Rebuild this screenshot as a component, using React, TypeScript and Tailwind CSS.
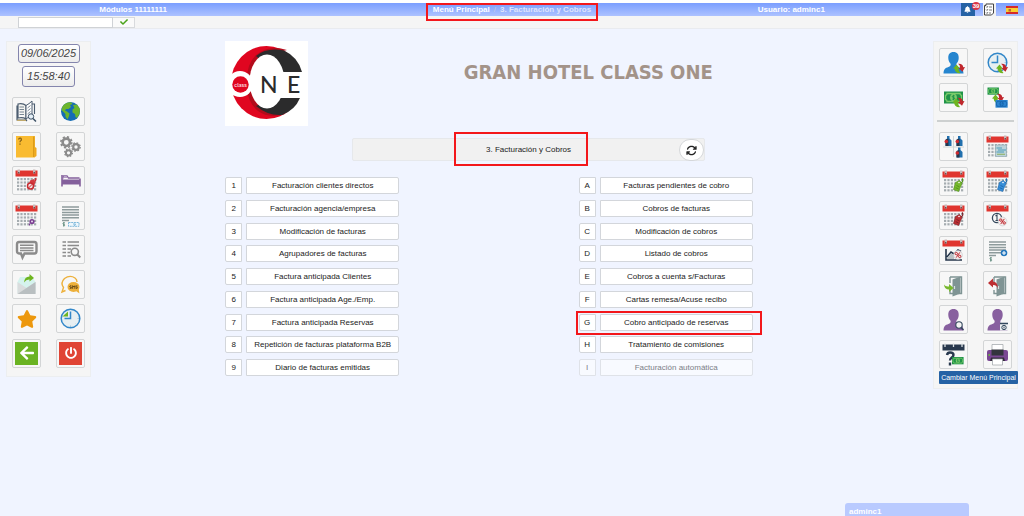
import { useState } from "react";
import type { ReactNode } from "react";
import { FaBell, FaStar, FaArrowLeft, FaPowerOff, FaCheck } from "react-icons/fa";
import { FaArrowsRotate } from "react-icons/fa6";

function Svg({ children }: { children: ReactNode }) {
  return (
    <svg viewBox="0 0 23 23" className="size-[23px]" fill="none" aria-hidden="true">
      {children}
    </svg>
  );
}

/* Small green/red exchange arrows used as a badge on several icons. */
function Swap({ x, y }: { x: number; y: number }) {
  return (
    <g transform={`translate(${x} ${y})`}>
      <path d="M-0.500 5 3 1 6.500 5.200 5 5Q5 7.600 7 9.600 1.600 10 1.200 5.200Z" fill="#6fb520" />
      <path d="M4.600 0.200Q9.500 -0.200 9.700 3.800L11.500 3.600 9 8.200 4.800 4.600 6.600 4.400Q6.800 1.800 4.600 0.200Z" fill="#c0272d" />
    </g>
  );
}

function Calendar({ children, dots = true }: { children?: ReactNode; dots?: boolean }) {
  const cols = [2, 5.4, 8.8, 12.2, 15.6, 19];
  const rows = [9, 12.4, 15.8, 19.2];
  return (
    <Svg>
      <path d="M0.5 1.5H22.5V7.5H0.5Z" fill="#e0352f" />
      <path d="M2.6 0.5h2.4v4H2.6zM18 0.5h2.4v4H18z" fill="#c9b9b9" />
      <path d="M3.2 3h1.2v1.5H3.2zM18.6 3h1.2v1.5h-1.2z" fill="#5a3a3a" />
      {dots &&
        rows.map((r) => cols.map((c) => <path key={`${r}-${c}`} d={`M${c} ${r}h2.2v2.2h-2.2z`} fill="#a5acb0" />))}
      {children}
    </Svg>
  );
}

function Tag({ color, dark }: { color: string; dark: string }) {
  return (
    <g>
      <path d="M20 8.5Q22.5 11 18 14" stroke={dark} strokeWidth="1.2" />
      <path d="M13.5 12.5 17.5 10.5 20 13.5 16.5 21.5 11.5 19.5Z" fill={color} stroke={dark} strokeWidth="0.6" />
      <path d="M14.5 15.5l3 1.3M13.7 17.7l3 1.3" stroke={dark} strokeWidth="0.8" />
      <circle cx="17" cy="12.5" r="0.8" fill="#fff" />
    </g>
  );
}

function Percent({ x, y }: { x: number; y: number }) {
  return (
    <g transform={`translate(${x} ${y})`}>
      <circle r="4.4" fill="#f3eeee" stroke="#c5c9cc" strokeWidth="0.6" />
      <circle cx="-1.7" cy="-1.4" r="1.2" stroke="#c0272d" strokeWidth="1" />
      <circle cx="1.7" cy="1.4" r="1.2" stroke="#c0272d" strokeWidth="1" />
      <path d="M1.8-2.6-1.8 2.6" stroke="#c0272d" strokeWidth="1" />
    </g>
  );
}

function Person({ color, children }: { color: string; children?: ReactNode }) {
  return (
    <Svg>
      <path
        d="M11.5 1C7.8 1 6 3.5 6.3 7.2c.1 2.6 1.2 4.3 2.3 5.5.3 1.8-.4 2.7-2.2 3.3C3.3 17 1.7 18 1.5 22.4H21.5C21.300 18 19.700 17 16.600 16 14.800 15.400 14.100 14.500 14.400 12.700 15.500 11.500 16.600 9.800 16.700 7.200 17 3.500 15.200 1 11.500 1Z"
        fill={color}
      />
      {children}
    </Svg>
  );
}

function Bill({ x, y, s, blue = false }: { x: number; y: number; s: number; blue?: boolean }) {
  const outer = blue ? "#2b83d0" : "#1f9348";
  const inner = blue ? "#1764ac" : "#7ccb6b";
  return (
    <g transform={`translate(${x} ${y}) scale(${s})`}>
      <path d="M0 0H19V12H0Z" fill={outer} />
      <path d="M3 2H16Q16 3.800 17.500 3.800V8.200Q16 8.200 16 10H3Q3 8.200 1.500 8.200V3.800Q3 3.800 3 2Z" stroke={inner} strokeWidth="1.300" />
      <ellipse cx="9.500" cy="6" rx="3.400" ry="3.800" fill={inner} />
      <path d="M10.800 4.500Q9.500 3.500 8.400 4.500T9.500 6 10.500 7.500 8.200 7.500M9.500 3.300V8.700" stroke={outer} strokeWidth="0.9" />
    </g>
  );
}

function TextLines({ children }: { children?: ReactNode }) {
  return (
    <Svg>
      <path d="M3 3H20M3 5.700H20M3 8.400H20M3 11.100H20M3 13.800H20M3 16.500H10" stroke="#8e9b9c" strokeWidth="1.500" />
      <path d="M5.500 18.600Q3.800 18.600 4 19.700T5.500 20.800 4 22M4.900 18V22.500" stroke="#5f8a7c" strokeWidth="0.9" />
      {children}
    </Svg>
  );
}

function Door({ children }: { children: ReactNode }) {
  return (
    <Svg>
      <path d="M8 3H19.500V19.500H16" stroke="#7f9494" strokeWidth="1.400" />
      <path d="M8 3V9M8 16V19.500H11" stroke="#7f9494" strokeWidth="1.400" />
      <path d="M10.500 5.500 18.500 2.500V19.500L10.500 22.500Z" fill="#7f9494" />
      <path d="M12.500 12V15" stroke="#d8e0e0" strokeWidth="1.200" />
      {children}
    </Svg>
  );
}

function Bottle({ x, y }: { x: number; y: number }) {
  return (
    <g transform={`translate(${x} ${y})`}>
      <path d="M2.500 0H5V2.500L7 4.500V10H1V4.500L2.500 2.500Z" fill="#2170ae" />
      <path d="M1 3.500 4 2.500V10H1Z" fill="#26364b" />
      <circle cx="1.800" cy="5.500" r="1.800" fill="#d02b31" />
    </g>
  );
}

function Clock() {
  return (
    <>
      <circle cx="11.500" cy="11.500" r="9.300" fill="#e7eff2" stroke="#3287c9" strokeWidth="1.500" />
      <path d="M11.500 4.500V11.500H5.500" stroke="#3287c9" strokeWidth="1.500" />
      <path d="M11.500 18.500v1.500M18.500 11.500H20M16.700 16.700l.8.8" stroke="#9dbfd4" strokeWidth="0.9" />
    </>
  );
}

const leftIcons: { label: string; icon: ReactNode }[] = [
  {
    label: "Consultar libro",
    icon: (
      <Svg>
        <path d="M3 4Q8 3 11 5.500V19Q8 17 3 18ZM3 6H2V20H11L12 21" fill="#f4f4f0" stroke="#4c5d70" strokeWidth="1.200" />
        <path d="M11 5.500Q14 4 17 1V14.500L11 19Z" fill="#fff" stroke="#4c5d70" strokeWidth="1" />
        <path d="M17 4H19.500V14" stroke="#4c5d70" strokeWidth="1.100" />
        <path d="M4.500 7H9M4.500 9.500H9M4.500 12H9M4.500 14.500H9M12.500 8 15.500 5.500M12.500 11 15.500 8.500M12.500 14 15.500 11.500" stroke="#697988" strokeWidth="0.9" />
        <path d="M2 20.300H11" stroke="#c8a95b" />
        <circle cx="16" cy="16.500" r="2.700" fill="#e6f0f7" stroke="#3c5065" />
        <path d="m18 18.500 3 3" stroke="#3c5065" strokeWidth="1.500" />
      </Svg>
    ),
  },
  {
    label: "Internet",
    icon: (
      <Svg>
        <circle cx="11.500" cy="11.500" r="9.500" fill="#166cb4" />
        <path d="M3.500 6.500Q7 2 12 2.300L13.500 4 11 5 12 7 9.500 9 7 9 6 10.500 8 11.500 10.500 13.500 10 16 8.500 19.500 6.500 16.500 6.500 14 4 11.500 2.500 10Z" fill="#6cb52d" />
        <path d="M14 5 18 4.500 21 9 20.500 14 18 18 16.500 17 16 14 13.500 12.500 13.500 9.500 15.500 8Z" fill="#6cb52d" />
      </Svg>
    ),
  },
  {
    label: "Ayuda",
    icon: (
      <Svg>
        <path d="M1 1H20V22.500H1Z" fill="#f9bb31" />
        <path d="M18 1.500H19.500V22H18Z" fill="#dd9b18" />
        <path d="M20 12 21.500 13V21L20 22Z" fill="#f1a91c" />
        <path d="M3.500 4.500Q4 3 5.300 3.200T6.300 5.300Q5 6 5 7.300M5 8.600V9.800" stroke="#8a6418" strokeWidth="1.300" />
      </Svg>
    ),
  },
  {
    label: "Configuración",
    icon: (
      <Svg>
        <g stroke="#8b8b8b">
          <circle cx="7.300" cy="7.300" r="3.700" strokeWidth="2.600" />
          <circle cx="7.300" cy="7.300" r="5.500" strokeWidth="1.600" strokeDasharray="2.200 2.120" />
          <circle cx="17" cy="12" r="2.800" strokeWidth="2.200" />
          <circle cx="17" cy="12" r="4.200" strokeWidth="1.300" strokeDasharray="1.650 1.650" />
          <circle cx="9.500" cy="17.800" r="2.600" strokeWidth="2" />
          <circle cx="9.500" cy="17.800" r="3.900" strokeWidth="1.300" strokeDasharray="1.530 1.530" />
        </g>
      </Svg>
    ),
  },
  {
    label: "Calendario de reservas",
    icon: (
      <Calendar>
        <path d="M20.500 9Q22 11 18 14" stroke="#c82a30" strokeWidth="1.400" />
        <path d="M15 11.500 19 10 20.500 13 18 20.500 13 19.500Z" fill="#d33b40" />
        <circle cx="15.500" cy="17" r="3" stroke="#c82a30" strokeWidth="1.500" fill="#f1e0e1" />
        <path d="m13.500 19 4-4" stroke="#c82a30" />
      </Calendar>
    ),
  },
  {
    label: "Habitaciones",
    icon: (
      <Svg>
        <path d="M3 6V17.500M21 9.500V17.500" stroke="#84609c" strokeWidth="1.600" />
        <path d="M3 10.500H21V15.500H3Z" fill="#84609c" />
        <path d="M4 9.500 4.500 6.800H8L9.500 9H20.500" stroke="#84609c" strokeWidth="1.300" />
        <path d="M4.500 7.500H8V9H4.500Z" fill="#b79cc7" />
      </Svg>
    ),
  },
  {
    label: "Calendario de eventos",
    icon: (
      <Calendar>
        <circle cx="17" cy="17.500" r="2.600" fill="#7a3d91" />
        <circle cx="17" cy="17.500" r="0.900" fill="#f3e8f7" />
        <path d="M14.500 19.500v2" stroke="#7a3d91" strokeWidth="1.200" />
      </Calendar>
    ),
  },
  {
    label: "Factura",
    icon: (
      <TextLines>
        <path d="M9.500 18.500H20V22.300H9.500Z" fill="#eef7fc" stroke="#61a8d3" strokeWidth="0.800" strokeDasharray="2 0.700" />
        <path d="M14 20h2.500l-1.200 2" stroke="#61a8d3" strokeWidth="0.800" />
      </TextLines>
    ),
  },
  {
    label: "Comentarios",
    icon: (
      <Svg>
        <path d="M4 4H19.500Q21.500 4 21.500 6.500V13Q21.500 15.500 19.500 15.500H9.500L7.500 19.500 6 15.500H4Q2 15.500 2 13V6.500Q2 4 4 4Z" stroke="#8b8b8b" strokeWidth="2.400" />
        <path d="M5 7.300H18.500M5 9.900H18.500M5 12.500H18.500" stroke="#8b8b8b" strokeWidth="1.500" />
      </Svg>
    ),
  },
  {
    label: "Buscar en lista",
    icon: (
      <Svg>
        <path d="M3.500 4H7M8.500 4H20M3.500 7.500H7M8.500 7.500H20M3.500 11H7M8.500 11H12M3.500 14.500H7M8.500 14.500H11M3.500 18H7M8.500 18H12" stroke="#8b8b8b" strokeWidth="1.700" />
        <circle cx="15.800" cy="13.800" r="3.600" stroke="#8b8b8b" strokeWidth="1.600" />
        <path d="m18.300 16.500 3 3" stroke="#8b8b8b" strokeWidth="2" />
      </Svg>
    ),
  },
  {
    label: "Enviar correo",
    icon: (
      <Svg>
        <path d="M2.500 9 5 4H17L20.500 9V20H2.500Z" fill="#d5f3ee" />
        <path d="M2.500 9 11.500 15 20.500 9V21H2.500Z" fill="#d9dcdd" />
        <path d="M20.500 9V21H2.500Z" fill="#b9bfc1" />
        <path d="M9 9.500Q9.500 3.500 14.500 3.500V1L19 5 14.500 8.500V6.500Q11 6.300 9 9.500Z" fill="#6fb520" />
      </Svg>
    ),
  },
  {
    label: "Enviar SMS",
    icon: (
      <Svg>
        <path d="M6.500 17.500 3 19 4.500 14.500Q1 10 5.500 5.500 11 1.500 16 5 18 6.500 18 9" stroke="#edb03a" strokeWidth="1.400" />
        <ellipse cx="14.500" cy="14" rx="6" ry="5" fill="#edb03a" />
        <path d="m17 18 3.500 2.500-1-5" fill="#edb03a" />
        <path d="M12.500 13Q11 12.300 10.800 13.300T12.300 14.500 10.800 15.500M13.700 15.800V12.700L14.800 14 15.900 12.700V15.800M18.500 13Q17.200 12.300 17.100 13.300T18.300 14.500 17 15.500" stroke="#553b12" strokeWidth="0.900" />
      </Svg>
    ),
  },
  { label: "Favoritos", icon: <FaStar className="size-5 text-[#ed980d]" /> },
  {
    label: "Historial",
    icon: (
      <Svg>
        <Clock />
        <path d="M3.500 9.500 9 4.500V9.500Z" fill="#6fb520" />
      </Svg>
    ),
  },
  {
    label: "Volver",
    icon: (
      <span className="flex size-[23px] items-center justify-center bg-[#6ab322]">
        <FaArrowLeft className="size-4 text-white" />
      </span>
    ),
  },
  {
    label: "Salir",
    icon: (
      <span className="flex size-[23px] items-center justify-center bg-[#e04434]">
        <FaPowerOff className="size-3 text-white" />
      </span>
    ),
  },
];

const rightTopIcons: { label: string; icon: ReactNode }[] = [
  { label: "Cambiar usuario", icon: <Person color="#2585cf"><Swap x={11.500} y={12.500} /></Person> },
  { label: "Cambiar turno", icon: <Svg><Clock /><Swap x={10.500} y={12.500} /></Svg> },
  { label: "Cambiar moneda", icon: <Svg><Bill x={2} y={5.500} s={1} /><Swap x={11} y={11.500} /></Svg> },
  {
    label: "Cambio de divisa",
    icon: (
      <Svg>
        <Bill x={1.500} y={1.500} s={0.6} />
        <Swap x={6.500} y={7.500} />
        <Bill x={9.500} y={14} s={0.64} blue />
      </Svg>
    ),
  },
];

const rightIcons: { label: string; icon: ReactNode }[] = [
  {
    label: "Minibar",
    icon: (
      <Svg>
        <path d="M11.500 1V22M1 12H22" stroke="#ccd2d4" strokeWidth="0.900" />
        <Bottle x={2.500} y={1} />
        <Bottle x={13.500} y={1} />
        <Bottle x={13.500} y={12.500} />
      </Svg>
    ),
  },
  {
    label: "Planning",
    icon: (
      <Calendar>
        <path d="M9.500 10H20.500V21.500H9.500Z" fill="#bcd3d9" stroke="#92aab2" strokeWidth="0.700" />
        <path d="M10.500 13H16M12 15H20M10.500 17H18" stroke="#4d9dbb" strokeWidth="1.100" />
        <path d="M11 19.300H19" stroke="#90b46b" strokeWidth="1.100" />
      </Calendar>
    ),
  },
  { label: "Tarifas verdes", icon: <Calendar><Tag color="#77b82e" dark="#4e8f16" /></Calendar> },
  { label: "Tarifas azules", icon: <Calendar><Tag color="#388fd8" dark="#1765ac" /></Calendar> },
  { label: "Tarifas rojas", icon: <Calendar><Tag color="#bd3034" dark="#791d22" /></Calendar> },
  {
    label: "Descuento por fecha",
    icon: (
      <Calendar dots={false}>
        <circle cx="11" cy="14" r="4.600" stroke="#33475b" strokeWidth="1.300" />
        <path d="M9.500 12 11 11V16M9.500 16.500H13" stroke="#33475b" strokeWidth="1.100" />
        <Percent x={16.500} y={17.500} />
      </Calendar>
    ),
  },
  {
    label: "Estadística de tarifas",
    icon: (
      <Calendar dots={false}>
        <path d="M4 10V21H20M5 18 9 13 12 15 16 11 19 12.500" stroke="#26364b" strokeWidth="1.600" />
        <path d="M5 19 9 14.500 12 16V20H5Z" fill="#b9c0c4" />
        <Percent x={16} y={16} />
      </Calendar>
    ),
  },
  {
    label: "Nueva factura",
    icon: (
      <TextLines>
        <circle cx="18" cy="14" r="3.300" fill="#2477bd" />
        <path d="M18 12V16M16 14H20" stroke="#fff" strokeWidth="1.100" />
      </TextLines>
    ),
  },
  { label: "Entrada", icon: <Door><path d="M2 10.500Q3.500 13 7 12.500V10L11.500 14 7 18V15.500Q2.500 15.500 2 10.500Z" fill="#78b82d" /></Door> },
  { label: "Salida", icon: <Door><path d="M11.500 15Q11.500 11 7 11V13.500L2 9 7 4.500V7.500Q12.500 8 11.500 15Z" fill="#bd2f32" /></Door> },
  {
    label: "Buscar cliente",
    icon: (
      <Person color="#88609f">
        <circle cx="17" cy="17" r="3.200" fill="#f4f4f4" stroke="#34495e" strokeWidth="1.100" />
        <path d="m19 19.500 2.500 2.500" stroke="#34495e" strokeWidth="1.500" />
      </Person>
    ),
  },
  {
    label: "Ficha de cliente",
    icon: (
      <Person color="#88609f">
        <path d="M14 14.500H22V22.500H14Z" fill="#eef1f2" />
        <path d="M14 15.500H22" stroke="#34495e" strokeWidth="1.500" />
        <circle cx="18" cy="19.500" r="2.200" stroke="#34495e" />
        <path d="M18 18.500V20.500" stroke="#34495e" />
      </Person>
    ),
  },
  {
    label: "Previsión de cobros",
    icon: (
      <Svg>
        <path d="M0.500 1.500H22.500V7.500H0.500Z" fill="#28384d" />
        <path d="M3 0.500V4M11.500 0.500V4M20 0.500V4" stroke="#d8dde0" strokeWidth="1.300" />
        <path d="M5 12Q5.500 9.500 8 9.500 11.500 9.500 11.500 12 11.500 13.500 9.500 14.700 8 15.700 8 17.500M8 19.500V22.500" stroke="#28384d" strokeWidth="2.400" />
        <Bill x={10} y={14} s={0.610} />
      </Svg>
    ),
  },
  {
    label: "Imprimir",
    icon: (
      <Svg>
        <path d="M6 1.500H17V8H6Z" fill="#fff" stroke="#9ba0a5" strokeWidth="0.700" />
        <path d="M3 7H20Q22 7 22 9V16Q22 18 20 18H3Q1 18 1 16V9Q1 7 3 7Z" fill="#7a4893" />
        <path d="M5.500 6.500H17.500V12.500H5.500Z" fill="#33343d" />
        <path d="M5 14.500H18L19 18H4Z" fill="#322a3b" />
        <path d="M6.500 16H16.500V22H6.500Z" fill="#fff" stroke="#9ba0a5" strokeWidth="0.700" />
        <circle cx="3.200" cy="12" r="0.900" fill="#67ba35" />
      </Svg>
    ),
  },
];

const leftMenu = [
  "Facturación clientes directos",
  "Facturación agencia/empresa",
  "Modificación de facturas",
  "Agrupadores de facturas",
  "Factura anticipada Clientes",
  "Factura anticipada Age./Emp.",
  "Factura anticipada Reservas",
  "Repetición de facturas plataforma B2B",
  "Diario de facturas emitidas",
].map((label, i) => ({ key: String(i + 1), label }));

const rightMenu = [
  "Facturas pendientes de cobro",
  "Cobros de facturas",
  "Modificación de cobros",
  "Listado de cobros",
  "Cobros a cuenta s/Facturas",
  "Cartas remesa/Acuse recibo",
  "Cobro anticipado de reservas",
  "Tratamiento de comisiones",
  "Facturación automática",
].map((label, i) => ({ key: "ABCDEFGHI"[i], label }));

function IconGrid({ items, className }: { items: { label: string; icon: ReactNode }[]; className: string }) {
  return (
    <div className={`grid grid-cols-[29px_29px] content-between justify-between ${className}`}>
      {items.map((item) => (
        <button
          key={item.label}
          type="button"
          aria-label={item.label}
          className="flex size-[29px] items-center justify-center rounded-[2px] border border-[#d3d5d6] bg-[#f7f7f7] hover:bg-white"
        >
          {item.icon}
        </button>
      ))}
    </div>
  );
}

function MenuColumn({
  items,
  highlighted,
  disabled,
}: {
  items: { key: string; label: string }[];
  highlighted?: string;
  disabled?: string;
}) {
  return (
    <ul className="flex h-[199px] w-[33%] flex-col justify-between">
      {items.map(({ key, label }) => {
        const off = key === disabled;
        const box = off ? "border-[#dfe2e8] bg-[#f8faff] text-[#7c8087]" : "border-[#d3d6db] bg-white text-[#222]";
        return (
          <li key={key} className="relative">
            <button type="button" disabled={off} className="flex w-full gap-1 text-center text-[8px] leading-[15px]">
              <span className={`w-[17px] shrink-0 rounded-l-[2px] border ${box}`}>{key}</span>
              <span className={`min-w-0 flex-1 whitespace-nowrap rounded-r-[2px] border ${box}`}>{label}</span>
            </button>
            {key === highlighted && (
              <span className="pointer-events-none absolute -top-[3px] -right-[9px] -bottom-1 -left-[3px] border-2 border-[#f3171b]" />
            )}
          </li>
        );
      })}
    </ul>
  );
}

function HotelLogo() {
  return (
    <svg viewBox="0 0 83 85" className="h-[85px] w-[83px] bg-white" role="img" aria-label="Class One">
      <ellipse cx="41.500" cy="41.500" rx="35.500" ry="36.500" fill="#e00620" />
      <path d="M62 9Q44 3 31 14 22 23 22 38H36L42 14Z" fill="#b30b1b" />
      <path d="M22 47Q23 62 33 70 44 78 60 73L42 66 34 47Z" fill="#b30b1b" />
      <path d="M31 15Q42 6 59 9.500 73 16 77 31H50Z" fill="#2b2b2c" />
      <path d="M31 65Q43 75 57 74 70 69 75 57H50Z" fill="#2b2b2c" />
      <ellipse cx="42" cy="40.500" rx="17.500" ry="27" fill="#fff" />
      <path d="M34 31H83V57H34Z" fill="#fff" />
      <circle cx="15" cy="43" r="13" fill="#fff" />
      <circle cx="15.500" cy="43.500" r="8.200" fill="#e00620" />
      <text x="15.500" y="45.500" textAnchor="middle" fontSize="6" fontFamily="Lato, sans-serif" fill="#fff">class</text>
      <text x="35" y="52" fontSize="23" fontFamily="Lato, sans-serif" fontWeight="500" fill="#2b2b2c">N</text>
      <text x="62" y="52" fontSize="23" fontFamily="Lato, sans-serif" fontWeight="500" fill="#2b2b2c">E</text>
    </svg>
  );
}

export default function App() {
  const [command, setCommand] = useState("");

  return (
    <div className="flex min-h-screen flex-col overflow-hidden bg-[#f0f4ff] font-['Liberation_Sans',Arial,sans-serif] text-[8px] text-[#222]">
      <header className="border-t-[3px] border-white">
        <div className="grid h-[13px] grid-cols-[26fr_48fr_8fr_18fr] items-center bg-linear-to-b from-[#7b9eff] to-[#adc2ff] font-bold leading-[13px] text-white">
          <span className="text-center">Módulos 11111111</span>
          <nav aria-label="Ruta" className="flex justify-center">
            <span className="relative whitespace-nowrap">
              <a href="#menu">Menú Principal</a>
              <span className="px-1 font-normal text-[#c3cbe0]">/</span>
              <span className="text-[#e0e5fb]">3. Facturación y Cobros</span>
              <span className="pointer-events-none absolute -inset-x-[7px] top-0 -bottom-[5px] border-2 border-[#f3171b]" />
            </span>
          </nav>
          <span className="whitespace-nowrap">Usuario: adminc1</span>
          <div className="flex h-[13px] items-center justify-end gap-2 pr-1.5">
            <button type="button" aria-label="Avisos" className="relative flex h-[13px] w-[14px] items-center justify-center bg-[#2562a5]">
              <FaBell className="size-[7px]" />
              <span className="absolute -top-[1px] -right-[5px] flex size-2 items-center justify-center rounded-full bg-[#dc3545] text-[6px] leading-none">39</span>
            </button>
            <button type="button" aria-label="Tareas" className="flex h-[13px] w-[13px] items-center justify-center bg-[#f2f2f2]">
              <svg viewBox="0 0 12 13" className="h-[13px] w-3" fill="none" aria-hidden="true">
                <path d="M3 1H10.500V10L8.500 12H1.500V2.500H3Z" fill="#fff" stroke="#444" />
                <path d="M3 3.500 4 4.500 5 3M3 6.500 4 7.500 5 6M3 9.500 4 10.500 5 9M6 4H9M6 7H9M6 10H8" stroke="#555" strokeWidth="0.800" />
              </svg>
            </button>
            <button type="button" aria-label="Español" className="ml-0.5 flex h-[13px] w-3 items-center">
              <svg viewBox="0 0 12 10" className="h-2.5 w-3" aria-hidden="true">
                <path d="M0 1H12V9H0Z" fill="#d52b2b" />
                <path d="M0 3H12V7H0Z" fill="#f9cf32" />
                <path d="M2.500 4H5V6.500H2.500Z" fill="#b96a31" />
              </svg>
            </button>
          </div>
        </div>
        <form className="flex h-[13px] items-center border-b border-[#e9ebef] bg-[#f5f5f5] pl-[18px]" onSubmit={(e) => e.preventDefault()}>
          <input
            aria-label="Comando"
            value={command}
            onChange={(e) => setCommand(e.target.value)}
            className="h-[11px] w-[95px] border border-[#cfd2d6] bg-white px-1 outline-none"
          />
          <button type="submit" aria-label="Aceptar" className="flex h-[11px] w-[22px] items-center justify-center border border-l-0 border-[#d8dadd] bg-[#fafafa]">
            <FaCheck className="size-2 text-[#4ba31b]" />
          </button>
        </form>
      </header>

      <div className="flex items-start pt-3">
        <aside className="ml-1.5 flex w-[85px] shrink-0 flex-col items-center border border-[#eceef0] bg-[#f5f5f5] px-[5px] pt-[2px] pb-2">
          <time className="flex h-[19px] w-[62px] items-center justify-center whitespace-nowrap rounded-[3px] border border-[#8485ad] bg-linear-to-b from-white to-[#ececec] text-[11px] italic text-[#444]">
            09/06/2025
          </time>
          <time className="mt-[3px] mb-2.5 flex h-[21px] w-[53px] items-center justify-center whitespace-nowrap rounded-[3px] border border-[#8485ad] bg-linear-to-b from-white to-[#ececec] text-[11px] italic text-[#444]">
            15:58:40
          </time>
          <IconGrid items={leftIcons} className="h-[271px] w-full" />
        </aside>

        <main className="min-w-0 flex-1 pr-[17.6%] pl-[13.1%]">
          <div className="flex h-[85px] justify-between">
            <HotelLogo />
            <h1 className="mt-4 whitespace-nowrap pr-10 font-['DejaVu_Sans_Condensed','DejaVu_Sans',sans-serif] text-xl leading-[30px] font-bold text-[#a39389]">
              GRAN HOTEL CLASS ONE
            </h1>
          </div>

          <div className="relative mt-3 mr-[9%] ml-[24%] flex h-[23px] items-center justify-center rounded-[2px] border border-[#e6e8eb] bg-[#f1f1f1]">
            <h2 className="relative">
              3. Facturación y Cobros
              <span className="pointer-events-none absolute -top-3 -right-[17px] -bottom-[10px] -left-8 border-2 border-[#f3171b]" />
            </h2>
            <button type="button" aria-label="Actualizar" className="absolute top-0 right-0 flex h-[22px] w-[25px] items-center justify-center rounded-full border border-[#d5d7da] bg-white">
              <FaArrowsRotate className="size-[11px] text-[#222]" />
            </button>
          </div>

          <div className="mt-4 flex justify-between">
            <MenuColumn items={leftMenu} />
            <MenuColumn items={rightMenu} highlighted="G" disabled="I" />
          </div>
        </main>

        <aside className="mr-1.5 w-[85px] shrink-0 border border-[#eceef0] bg-[#f5f5f5] px-[5px] pt-[6px] pb-1">
          <IconGrid items={rightTopIcons} className="h-16 w-full" />
          <hr className="-mx-0.5 mt-2 mb-[10px] border-t-2 border-[#cdd0d0]" />
          <IconGrid items={rightIcons} className="h-[237px] w-full" />
          <button type="button" className="mt-0.5 h-[13px] w-[79px] whitespace-nowrap rounded-[1px] bg-[#2562a5] text-[7px] leading-[13px] text-white">
            Cambiar Menú Principal
          </button>
        </aside>
      </div>

      <button type="button" className="fixed right-[55px] bottom-0 h-[13px] w-[124px] rounded-t-[3px] bg-[#b9caff] pt-1 pl-1 text-left leading-[9px] font-bold text-white">
        adminc1
      </button>
    </div>
  );
}
